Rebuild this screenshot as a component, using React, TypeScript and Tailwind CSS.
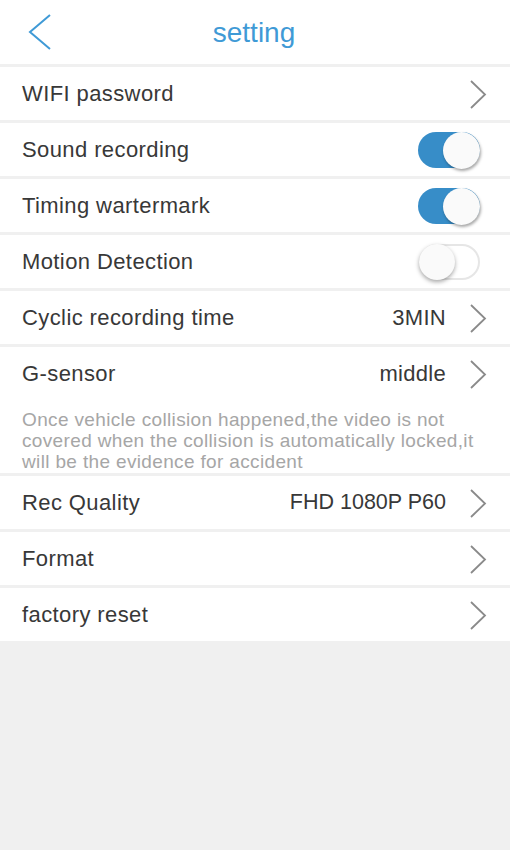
import React from "react";

const Chevron = () => (
  <svg width="20" height="32" viewBox="0 0 20 32" className="shrink-0">
    <polyline points="3,3 17,16.5 3,30" fill="none" stroke="#8a8a8a" strokeWidth="1.8" />
  </svg>
);

const Toggle = ({ on }: { on: boolean }) =>
  on ? (
    <div className="relative w-[62px] h-[36px] rounded-full bg-[#378dc8] shrink-0">
      <div className="absolute right-[0px] top-[0px] w-[37px] h-[37px] rounded-full bg-[#fafafa] shadow-[1px_2px_3px_rgba(0,0,0,0.35)]" />
    </div>
  ) : (
    <div className="relative w-[61px] h-[36px] rounded-full bg-white border-2 border-[#e6e6e6] shrink-0">
      <div className="absolute left-[-2px] top-[-2px] w-[36px] h-[36px] rounded-full bg-[#fafafa] shadow-[0px_2px_4px_rgba(0,0,0,0.35)]" />
    </div>
  );

const Row = ({
  label,
  value,
  valueClass,
  chevron,
  toggle,
}: {
  label: string;
  value?: string;
  valueClass?: string;
  chevron?: boolean;
  toggle?: boolean;
}) => (
  <div className="h-[53px] bg-white flex items-center pl-[22px] pr-[22px]">
    <span className="flex-1 text-[22px] tracking-[0.4px] text-[#383838]">{label}</span>
    {value && (
      <span className={"text-[#383838] mr-[22px] " + (valueClass ?? "text-[22px] tracking-[0.3px]")}>{value}</span>
    )}
    {chevron && <Chevron />}
    {toggle !== undefined && (
      <div className="mr-[8px]">
        <Toggle on={toggle} />
      </div>
    )}
  </div>
);

export default function App() {
  return (
    <div
      className="w-[510px] h-[850px] bg-[#f0f0f0] flex flex-col gap-[3px]"
      style={{ fontFamily: '"Liberation Sans", Arial, sans-serif' }}
    >
      <div className="h-[64px] bg-white flex items-center relative">
        <svg width="30" height="40" viewBox="0 0 30 40" className="absolute left-[24px] top-[12px]">
          <polyline points="26,3 6,20 26,37" fill="none" stroke="#3f9ad6" strokeWidth="2" />
        </svg>
        <div className="flex-1 text-center text-[28px] text-[#3f9ad6] pr-[2px] pt-[2px]">setting</div>
      </div>
      <Row label="WIFI password" chevron />
      <Row label="Sound recording" toggle={true} />
      <Row label="Timing wartermark" toggle={true} />
      <Row label="Motion Detection" toggle={false} />
      <Row label="Cyclic recording time" value="3MIN" chevron />
      <div className="bg-white">
        <Row label="G-sensor" value="middle" chevron />
        <div className="pl-[22px] pr-[20px] pt-[9px] pb-[1px] text-[19px] tracking-[0.35px] leading-[21px] text-[#a6a6a6]">
          Once vehicle collision happened,the video is not covered when the collision is automatically locked,it will be the evidence for accident
        </div>
      </div>
      <Row label="Rec Quality" value="FHD 1080P P60" valueClass="text-[21.5px] tracking-[0px]" chevron />
      <Row label="Format" chevron />
      <Row label="factory reset" chevron />
    </div>
  );
}
